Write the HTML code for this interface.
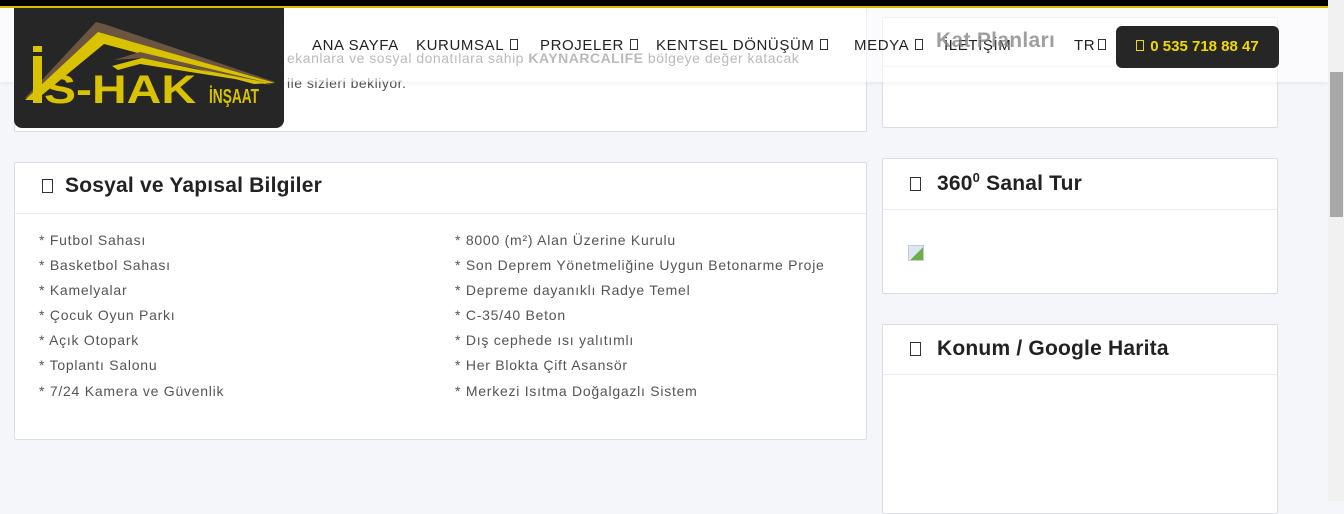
<!DOCTYPE html>
<html><head><meta charset="utf-8"><style>
*{margin:0;padding:0;box-sizing:border-box}
body{width:1344px;height:501px;overflow:hidden;background:#f5f6fa;font-family:"Liberation Sans",sans-serif;position:relative;color:#333}
.card{position:absolute;background:#fff;border:1px solid #dcdde2;border-radius:2px}
.hd{position:absolute;left:0;right:0;border-bottom:1px solid #ececee}
h3{position:absolute;font-size:21px;font-weight:bold;color:#222;letter-spacing:0.2px;white-space:nowrap}
.ic{display:inline-block;width:11px;height:14px;border:1px solid #333;margin-right:12px;vertical-align:-1px}
.li{position:absolute;font-size:14px;color:#555;white-space:nowrap;letter-spacing:0.75px}
.nav{position:absolute;top:37px;font-size:15px;color:#222;white-space:nowrap;letter-spacing:0.6px}
.box{display:inline-block;width:8px;height:11px;border:1px solid #333;margin-left:6px;vertical-align:0}
</style></head><body>
<div class="card" style="left:14px;top:-5px;width:853px;height:137px"></div>
<div style="position:absolute;left:287px;top:50px;font-size:14px;color:#666;white-space:nowrap;letter-spacing:0.5px">ekanlara ve sosyal donatılara sahip <b>KAYNARCALIFE</b> bölgeye değer katacak</div>
<div style="position:absolute;left:287px;top:75px;font-size:14px;color:#555;letter-spacing:0.5px">ile sizleri bekliyor.</div>
<div class="card" style="left:882px;top:17px;width:396px;height:111px"><div class="hd" style="top:48px"></div></div>

<div class="card" style="left:14px;top:162px;width:853px;height:278px"><div class="hd" style="top:50px"></div></div>
<h3 style="left:42px;top:174px"><span class="ic"></span>Sosyal ve Yapısal Bilgiler</h3>
<div class="li" style="left:39px;top:232px">* Futbol Sahası</div>
<div class="li" style="left:39px;top:257px">* Basketbol Sahası</div>
<div class="li" style="left:39px;top:282px">* Kamelyalar</div>
<div class="li" style="left:39px;top:307px">* Çocuk Oyun Parkı</div>
<div class="li" style="left:39px;top:332px">* Açık Otopark</div>
<div class="li" style="left:39px;top:357px">* Toplantı Salonu</div>
<div class="li" style="left:39px;top:383px">* 7/24 Kamera ve Güvenlik</div>
<div class="li" style="left:455px;top:232px">* 8000 (m²) Alan Üzerine Kurulu</div>
<div class="li" style="left:455px;top:257px">* Son Deprem Yönetmeliğine Uygun Betonarme Proje</div>
<div class="li" style="left:455px;top:282px">* Depreme dayanıklı Radye Temel</div>
<div class="li" style="left:455px;top:307px">* C-35/40 Beton</div>
<div class="li" style="left:455px;top:332px">* Dış cephede ısı yalıtımlı</div>
<div class="li" style="left:455px;top:357px">* Her Blokta Çift Asansör</div>
<div class="li" style="left:455px;top:383px">* Merkezi Isıtma Doğalgazlı Sistem</div>

<div class="card" style="left:882px;top:158px;width:396px;height:136px"><div class="hd" style="top:50px"></div>
<div style="position:absolute;left:25px;top:86px;width:16px;height:16px;background:linear-gradient(135deg,#dde6f5 55%,#6cb04a 55%);border:1px solid #ccc"></div></div>
<h3 style="left:910px;top:170px"><span class="ic" style="margin-right:16px"></span>360<sup style="font-size:13px">0</sup> Sanal Tur</h3>
<div class="card" style="left:882px;top:324px;width:396px;height:190px"><div class="hd" style="top:49px"></div></div>
<h3 style="left:910px;top:337px"><span class="ic" style="margin-right:16px"></span>Konum / Google Harita</h3>

<div style="position:absolute;left:0;top:8px;width:1328px;height:74px;background:rgba(255,255,255,0.55);box-shadow:0 2px 4px rgba(0,0,0,0.05)"></div>
<div style="position:absolute;left:0;top:0;width:1328px;height:8px;background:#000;border-bottom:2px solid #d4c000"></div>
<div style="position:absolute;left:14px;top:8px;width:270px;height:120px;background:#262626;border-radius:0 0 8px 8px;overflow:hidden">
<svg width="270" height="120" viewBox="0 0 270 120">
<polygon points="11,90 82,14 90,16 261,74 252,75 88,26 20,90" fill="#6b5440"/>
<polygon points="11,92 84,24 261,75 240,76 90,36 22,92" fill="#d9c200"/>
<polygon points="100,52 126,44 255,75 128,50" fill="#6b5440"/>
<polygon points="98,58 128,50 258,77 126,56 104,62" fill="#d9c200"/>
<rect x="19" y="48" width="9" height="47" fill="#d9c200"/>
<rect x="19" y="38" width="9" height="6" fill="#d9c200"/>
<text x="30" y="95" font-family="Liberation Sans" font-weight="bold" font-size="40" fill="#d9c200" textLength="152" lengthAdjust="spacingAndGlyphs">S-HAK</text>
<text x="195" y="95" font-family="Liberation Sans" font-weight="bold" font-size="20" fill="#d9c200" textLength="50" lengthAdjust="spacingAndGlyphs">İNŞAAT</text>
</svg></div>
<div class="nav" style="left:312px">ANA SAYFA</div>
<div class="nav" style="left:416px">KURUMSAL<span class="box"></span></div>
<div class="nav" style="left:540px">PROJELER<span class="box"></span></div>
<div class="nav" style="left:656px">KENTSEL DÖNÜŞÜM<span class="box"></span></div>
<div class="nav" style="left:854px">MEDYA<span class="box"></span></div>
<div class="nav" style="left:944px">İLETİŞİM</div>
<div style="position:absolute;left:936px;top:29px;font-size:21px;font-weight:bold;color:#888;opacity:.8;letter-spacing:0.3px">Kat Planları</div>
<div class="nav" style="left:1074px">TR<span class="box" style="margin-left:3px"></span></div>
<div style="position:absolute;left:1116px;top:26px;width:163px;height:42px;background:#262626;border-radius:6px;color:#f0d800;font-weight:bold;font-size:15px;line-height:42px;text-align:center"><span class="box" style="border-color:#f0d800;margin:0 6px 0 0"></span>0 535 718 88 47</div>
<div style="position:absolute;left:1328px;top:0;width:16px;height:501px;background:#f1f1f1"></div>
<div style="position:absolute;left:1330px;top:72px;width:13px;height:145px;background:#a8a8a8"></div>
</body></html>
